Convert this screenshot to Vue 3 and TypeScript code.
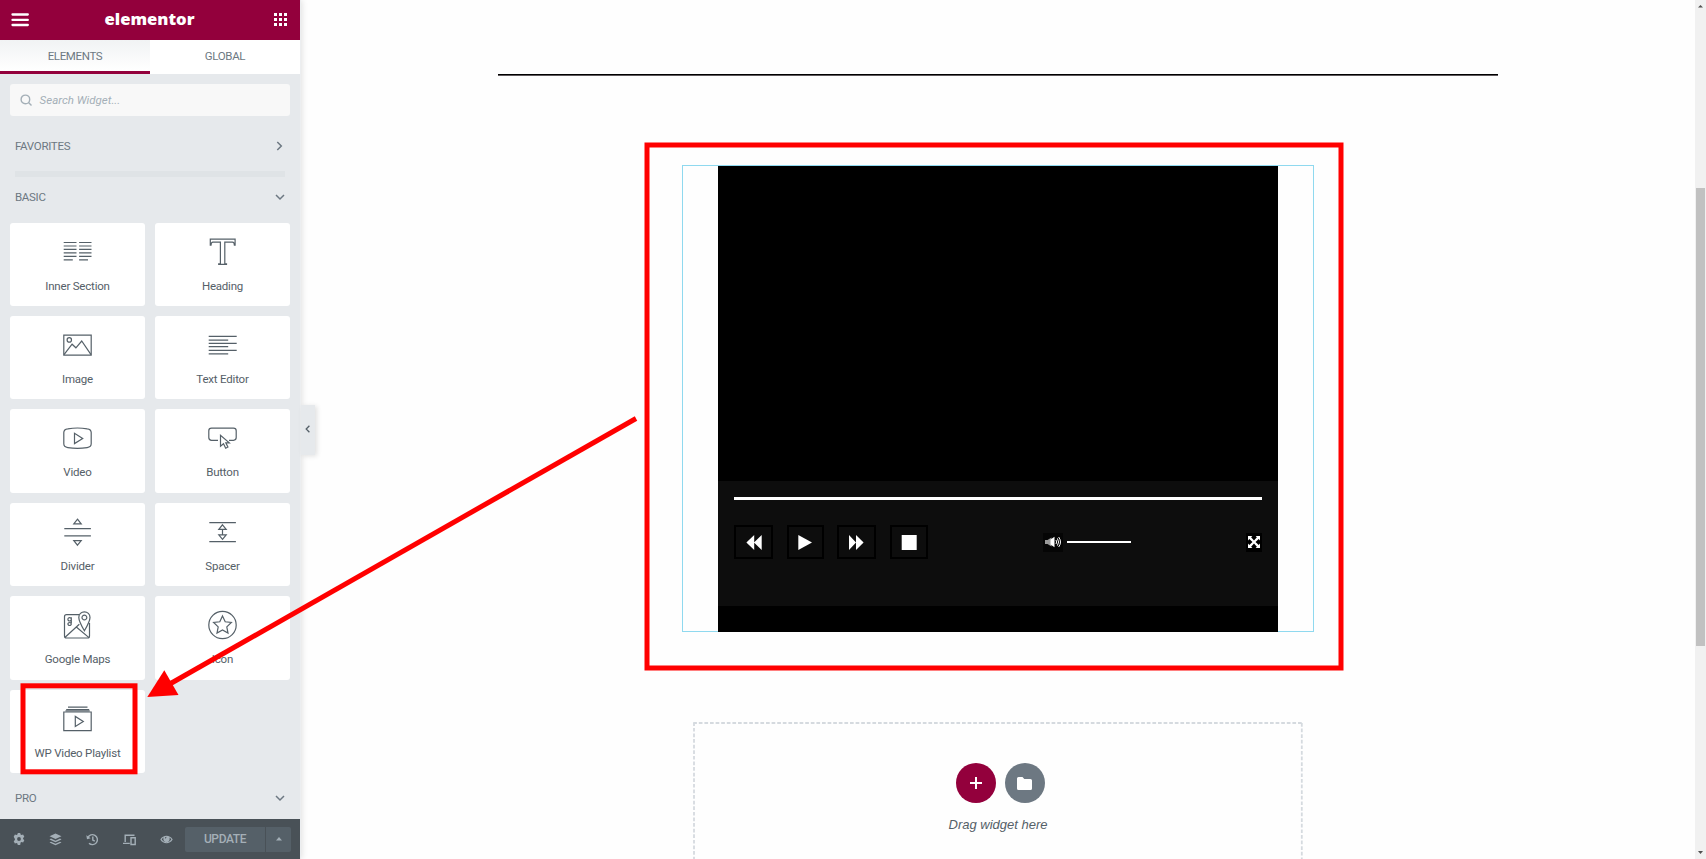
<script setup lang="ts">
interface Widget {
  name: string
  paths: string[]
}

const widgets: Widget[] = [
  {
    name: 'Inner Section',
    paths: ['M1.2 5.5H14M1.2 9H14M1.2 12.4H14M1.2 15.8H14M1.2 19.3H14M1.2 22.9H10.3M16.6 5.5H29M16.6 9H29M16.6 12.4H29M16.6 15.8H29M16.6 19.3H29M16.6 22.9H25.5'],
  },
  {
    name: 'Heading',
    paths: ['M2.8 2.2H27.6V8.2H26.9Q26.8 5.2 25 5.2H17.3V26.8H19V27.4H11.2V26.8H12.9V5.2H5.4Q3.6 5.2 3.500 8.2H2.8Z'],
  },
  {
    name: 'Image',
    paths: ['M1.3 5.2H28.7V25.2H1.3Z', 'M1.5 24.7L9.6 14.2L13.4 17.8L19.2 11L28.5 24.7', 'M9 9.9A2.2 2.2 0 1 1 4.6 9.9A2.2 2.2 0 1 1 9 9.9'],
  },
  {
    name: 'Text Editor',
    paths: ['M1.2 6.3H29.2M1.2 10.1H20.7M1.2 13.4H29.2M1.2 16.7H20.7M1.2 20.3H29.2M1.2 23.9H20.7'],
  },
  {
    name: 'Video',
    paths: ['M5.3 5.8Q15 4.2 24.7 5.8Q28.7 6.2 28.7 9.6V20.8Q28.7 24 24.7 24.6Q15 26 5.3 24.6Q1.3 24 1.3 20.8V9.6Q1.3 6.2 5.3 5.8Z', 'M12 10.3V20.6L20.2 15.5Z'],
  },
  {
    name: 'Button',
    paths: ['M10.5 17.3H4Q1.3 17.3 1.3 14.6V7.8Q1.3 5.1 4 5.1H26Q28.7 5.1 28.7 7.8V14.6Q28.7 17.3 26 17.3H21.5', 'M13 12.2V23.2L16 20.8L18.2 25.2L20.4 24.1L18.3 19.8H21.8Z'],
  },
  {
    name: 'Divider',
    paths: ['M1.8 11.7H28.4M1.8 18.8H28.4', 'M15 2.2L18.7 6.8H11.3Z', 'M15 28.2L18.7 23.6H11.3Z'],
  },
  {
    name: 'Spacer',
    paths: ['M1.8 5.6H28.4M1.8 24.6H28.4M15 12V18', 'M15 7.8L18.7 12.4H11.3Z', 'M15 22.4L18.7 17.8H11.3Z'],
  },
  {
    name: 'Google Maps',
    paths: [
      'M16.5 4.7H4Q2 4.7 2 6.7V26Q2 28 4 28H25Q27 28 27 26V13',
      'M2.6 27.3L16.800 14.300M13.800 17L26.5 27.600',
      'M21.9 20.8Q16.3 11 16.3 7.4A5.6 5.6 0 0 1 27.5 7.4Q27.5 11 21.9 20.8Z',
      'M24.3 7.5A2.4 2.4 0 1 1 19.5 7.5A2.4 2.4 0 1 1 24.3 7.5',
      'M8.8 7.3V13M8.8 9.3A1.7 1.7 0 1 1 5.4 9.3A1.7 1.7 0 1 1 8.8 9.3M8.8 14A1.7 1.5 0 1 1 5.4 14A1.7 1.5 0 1 1 8.8 14',
    ],
  },
  {
    name: 'Icon',
    paths: ['M28.7 15A13.7 13.7 0 1 1 1.3 15A13.7 13.7 0 1 1 28.7 15', 'M15 6L17.7 11.8L23.9 12.5L19.3 16.9L20.5 23.1L15 20L9.5 23.1L10.7 16.9L6.1 12.5L12.3 11.8Z'],
  },
  {
    name: 'WP Video Playlist',
    paths: ['M1.3 8H28.7V26.7H1.3Z', 'M3.7 5.5H26.7M5.5 3.1H25M3 6.8H27.2', 'M12.8 12.4V22.4L20.8 17.4Z'],
  },
]
</script>

<template>
  <div class="editor">
    <aside class="panel">
      <header class="bar">
        <svg class="menu" width="18" height="14" viewBox="0 0 18 14"><path d="M1.5 1.5H16.8M1.5 6.9H16.8M1.5 12H16.8" /></svg>
        <svg class="logo" width="92" height="24" viewBox="0 0 92 24"><text x="1.500" y="17" textLength="90" lengthAdjust="spacingAndGlyphs">elementor</text></svg>
        <svg class="apps" width="13" height="13" viewBox="0 0 13 13"><path d="M0 0h3v3H0zM5 0h3v3H5zM10 0h3v3h-3zM0 5h3v3H0zM5 5h3v3H5zM10 5h3v3h-3zM0 10h3v3H0zM5 10h3v3H5zM10 10h3v3h-3z" /></svg>
      </header>
      <nav class="tabs">
        <div class="tab active">ELEMENTS</div>
        <div class="tab">GLOBAL</div>
      </nav>
      <div class="search">
        <svg width="12" height="12" viewBox="0 0 12 12"><circle cx="5.4" cy="5.4" r="4.300" /><path d="M8.500 8.500l3 3" /></svg>
        <span>Search Widget...</span>
      </div>
      <div class="category favorites">
        <span>FAVORITES</span>
        <svg width="10" height="10" viewBox="0 0 10 10"><path d="M2.300 1l4 4-4 4" /></svg>
      </div>
      <div class="separator"></div>
      <div class="category basic">
        <span>BASIC</span>
        <svg width="10" height="10" viewBox="0 0 10 10"><path d="M1 3l4 4 4-4" /></svg>
      </div>
      <div class="widgets">
        <div v-for="w in widgets" :key="w.name" class="card">
          <svg width="30" height="30" viewBox="0.5 0 30 30"><path v-for="(p, i) in w.paths" :key="i" :d="p" /></svg>
          <span>{{ w.name }}</span>
        </div>
      </div>
      <div class="category pro">
        <span>PRO</span>
        <svg width="10" height="10" viewBox="0 0 10 10"><path d="M1 3l4 4 4-4" /></svg>
      </div>
      <footer class="tools">
        <div class="tool">
          <svg width="12" height="12" viewBox="0 0 12 12"><path fill-rule="evenodd" d="M4.800 0h2.400l.4 1.600.9.5 1.600-.5 1.200 2.100-1.200 1.200v1.200l1.200 1.200-1.200 2.100-1.600-.5-.9.5L7.200 12H4.800l-.4-1.600-.9-.5-1.600.5L.7 8.300l1.200-1.200V5.900L.7 3.700l1.200-2.100 1.600.5.9-.5zM6 4.100a1.900 1.900 0 1 0 0 3.800 1.900 1.900 0 0 0 0-3.800z" /></svg>
        </div>
        <div class="tool">
          <svg width="13" height="13" viewBox="0 0 13 13"><path d="M6.500 0.500L12.500 3.300 6.500 6.100.5 3.300zM2 5.600L.5 6.400l6 2.800 6-2.800-1.500-.8-4.500 2.100zM2 8.700l-1.500.8 6 2.800 6-2.800-1.500-.8-4.500 2.100z" /></svg>
        </div>
        <div class="tool line">
          <svg width="13" height="13" viewBox="0 0 13 13"><path d="M1.800 4.700A5 5 0 1 1 3 10.300M6.800 3.500V7l2 1.200" /><path class="solid" d="M.3 2.200L1 6.300l3.700-1z" /></svg>
        </div>
        <div class="tool line">
          <svg width="13" height="13" viewBox="0 0 13 13"><path d="M2.200 9V2.300H11.500M0 10.400H6.800M8 4.800h4.200v6.700H8z" /></svg>
        </div>
        <div class="tool">
          <svg width="13" height="13" viewBox="0 0 13 13"><path fill-rule="evenodd" d="M.3 6.500C3.200 1.500 9.800 1.500 12.700 6.500 9.800 11.500 3.200 11.500.3 6.500zM1.700 6.500C4 9.900 9 9.900 11.300 6.500 10.800 5.700 10.100 5 9.400 4.600A3.200 3.200 0 1 1 3.600 4.600C2.900 5 2.200 5.700 1.700 6.500zM6.300 3.700A1.600 1.600 0 0 0 4.900 5.300L5.700 5.400 6.400 4.500z" /></svg>
        </div>
        <div class="update">UPDATE</div>
        <div class="caret"><svg width="6" height="4" viewBox="0 0 6 4"><path d="M3 0l3 3.500H0z" /></svg></div>
      </footer>
    </aside>

    <main class="preview">
      <div class="rule"></div>
      <section class="element">
        <div class="player">
          <div class="controls">
            <div class="progress"></div>
            <div class="buttons">
              <div class="btn rewind"><svg width="17" height="15" viewBox="0 0 17 15"><path d="M8.200 0v15L.4 7.500zM15.700 0v15L8 7.500z" /></svg></div>
              <div class="btn play"><svg width="15" height="15" viewBox="0 0 15 15"><path d="M.3 0v15L14 7.500z" /></svg></div>
              <div class="btn forward"><svg width="17" height="15" viewBox="0 0 17 15"><path d="M1 0v15L8 7.500zM8 0v15L15.600 7.500z" /></svg></div>
              <div class="btn stop"><svg width="16" height="15" viewBox="0 0 16 15"><path d="M.7 0h15v15h-15z" /></svg></div>
              <div class="volume">
                <svg width="17" height="12" viewBox="0 0 17 12">
                  <path class="dim" d="M0 4h2.500L6.500 1.500v9L2.500 8H0z" /><path d="M5.500 3.500L9.500.8v10.400L5.500 8.500z" />
                  <path class="wave" d="M11 4q1.200 2 0 4M12.400 2.400q2.400 3.600 0 7.200M13.700 1q3.600 5 0 10" />
                </svg>
              </div>
              <div class="level"></div>
              <div class="full">
                <svg width="12" height="12" viewBox="0 0 12 12"><path d="M0 0h4.400L3.100 1.300 6 4.500 8.900 1.300 7.600 0H12v4.400l-1.300-1.300L7.500 6l3.200 2.900L12 7.600V12H7.600l1.300-1.300L6 7.500l-2.900 3.200L4.400 12H0V7.600l1.300 1.300L4.500 6 1.300 3.100 0 4.400z" /></svg>
              </div>
            </div>
          </div>
        </div>
      </section>
      <section class="dropzone">
        <svg class="outline" width="612" height="200" viewBox="0 0 612 200">
          <path d="M1 200V1" /><path d="M0.200 1H609.600" /><path d="M608.800 1V200" />
        </svg>
        <div class="adders">
          <div class="circle add"><svg width="12" height="12" viewBox="0 0 12 12"><path d="M5 0h2v5h5v2H7v5H5V7H0V5h5z" /></svg></div>
          <div class="circle folder"><svg width="15" height="13" viewBox="0 0 15 13"><path d="M1.500 0h4L7.300 1.900H13.500Q15 1.900 15 3.400V11.500Q15 13 13.500 13H1.500Q0 13 0 11.500V1.500Q0 0 1.500 0z" /></svg></div>
        </div>
        <p>Drag widget here</p>
      </section>
    </main>

    <div class="scrollbar">
      <svg width="5" height="3" viewBox="0 0 5 3"><path d="M2.500 0L5 2.500H0z" /></svg>
      <div class="thumb"></div>
      <svg class="down" width="5" height="3" viewBox="0 0 5 3"><path d="M0 0h5L2.500 3z" /></svg>
    </div>

    <div class="collapse"><svg width="6" height="8" viewBox="0 0 6 8"><path d="M4.400 .8L1.200 4l3.200 3.200" /></svg></div>

    <svg class="annotations" width="1706" height="859" viewBox="0 0 1706 859">
      <rect x="647" y="145" width="694" height="523" />
      <rect x="23" y="685.800" width="112" height="86" />
      <path class="shaft" d="M636 418.500L168 685" />
      <path class="head" d="M147.300 697L164.300 670.300L178.500 695z" />
    </svg>
  </div>
</template>

<style>
body {
  margin: 0;
  overflow: hidden;
}
</style>

<style scoped>
.editor {
  position: relative;
  display: flex;
  width: 1706px;
  height: 859px;
  overflow: hidden;
  background: #fefefe;
  font-family: Roboto, "Liberation Sans", sans-serif;
}
.panel {
  display: flex;
  flex-direction: column;
  flex: none;
  width: 300px;
  background: #e6e9ec;
  border-right: 1px solid #eceef0;
  box-shadow: 1px 0 6px rgba(0, 0, 0, 0.12);
  box-sizing: content-box;
  z-index: 1;
}
.bar {
  display: flex;
  align-items: center;
  justify-content: space-between;
  width: 300px;
  height: 40px;
  padding: 0 13px 0 11px;
  box-sizing: border-box;
  background: #93003c;
}
.menu path {
  stroke: #fff;
  stroke-width: 2.300;
  stroke-linecap: round;
}
.logo {
  margin-left: -5px;
  overflow: visible;
}
.logo text {
  font: 800 16px "Open Sans", sans-serif;
  fill: #fff;
}
.apps {
  margin-bottom: 1px;
  fill: #fff;
}
.tabs {
  display: flex;
  width: 300px;
  height: 34px;
}
.tab {
  flex: 1;
  height: 34px;
  box-sizing: border-box;
  background: #fff;
  color: #6d7882;
  font-size: 11.500px;
  letter-spacing: -0.350px;
  line-height: 32px;
  text-align: center;
}
.tab.active {
  background: linear-gradient(#f1f3f4, #fff);
  border-bottom: 3px solid #93003c;
}
.search {
  display: flex;
  align-items: center;
  gap: 7.600px;
  width: 280px;
  height: 32px;
  margin: 10px 10px 0;
  padding-left: 10px;
  box-sizing: border-box;
  border-radius: 3px;
  background: #f8f8f8;
  color: #a4afb7;
  font-size: 11.500px;
  font-style: italic;
}
.search svg {
  fill: none;
  stroke: #a4afb7;
  stroke-width: 1.400;
}
.category {
  display: flex;
  align-items: center;
  justify-content: space-between;
  width: 270px;
  height: 20px;
  margin-left: 15px;
  color: #6d7882;
  font-size: 11.500px;
  letter-spacing: -0.300px;
}
.category svg {
  fill: none;
  stroke: #6d7882;
  stroke-width: 1.500;
}
.favorites {
  margin-top: 20px;
}
.separator {
  width: 270px;
  height: 6px;
  margin: 15px 0 0 15px;
  background: #dfe3e6;
}
.basic {
  margin-top: 10px;
}
.widgets {
  display: grid;
  grid-template-columns: 135px 135px;
  grid-auto-rows: 83.420px;
  gap: 10px;
  margin: 15.600px 0 0 10px;
}
.card {
  display: flex;
  flex-direction: column;
  align-items: center;
  padding-top: 14px;
  box-sizing: border-box;
  border-radius: 3px;
  background: #fff;
  color: #556068;
  font-size: 11.500px;
  letter-spacing: -0.200px;
}
.card svg {
  flex: none;
  margin-left: 1px;
  fill: none;
  stroke: #556068;
  stroke-width: 1.200;
}
.card span {
  margin-top: 12px;
  line-height: 14px;
}
.pro {
  margin-top: 15px;
}
.tools {
  display: flex;
  align-items: center;
  width: 300px;
  height: 40px;
  margin-top: auto;
  background: #495157;
}
.tool {
  display: flex;
  justify-content: center;
  width: 37px;
}
.tool svg,
.caret svg {
  fill: #a4afb7;
}
.tool.line svg {
  fill: none;
  stroke: #a4afb7;
  stroke-width: 1.400;
}
.tool .solid {
  fill: #a4afb7;
  stroke: none;
}
.update,
.caret {
  display: flex;
  align-items: center;
  justify-content: center;
  height: 25px;
  background: #556068;
  border-radius: 2px 0 0 2px;
  color: #a4afb7;
  font-size: 12px;
  font-weight: 500;
  letter-spacing: -0.400px;
}
.update {
  width: 80px;
}
.caret {
  width: 25px;
  margin-left: 1px;
  border-radius: 0 2px 2px 0;
}
.preview {
  display: flex;
  flex: 1;
  flex-direction: column;
  align-items: center;
}
.rule {
  flex: none;
  width: 1000px;
  height: 1px;
  margin-top: 74px;
  background: #000;
  border-bottom: 1px solid #5d585b;
}
.element {
  display: flex;
  flex: none;
  justify-content: center;
  width: 632px;
  height: 467px;
  margin-top: 89px;
  box-sizing: border-box;
  border: 1px solid #8fd9ef;
}
.player {
  width: 560px;
  height: 466px;
  box-sizing: border-box;
  padding-top: 315px;
  background: #000;
}
.controls {
  height: 125px;
  padding: 16px 16px 0;
  box-sizing: border-box;
  background: #0d0d0d;
}
.progress {
  height: 3px;
  background: #fff;
}
.buttons {
  display: flex;
  align-items: center;
  height: 34px;
  margin-top: 25px;
}
.btn {
  display: flex;
  align-items: center;
  justify-content: center;
  height: 34px;
  box-sizing: border-box;
  border: 2px solid #000;
  fill: #fff;
}
.btn svg {
  margin-top: 1px;
}
.rewind,
.forward {
  width: 39px;
}
.rewind svg {
  margin-left: 1px;
}
.play {
  width: 37px;
  margin: 0 13px 0 14px;
}
.stop {
  width: 38px;
  margin-left: 14px;
}
.volume {
  display: flex;
  align-items: center;
  justify-content: center;
  width: 20px;
  height: 19px;
  margin-left: 115px;
  background: #050505;
  fill: #fff;
}
.volume .dim {
  fill: #999;
}
.volume .wave {
  fill: none;
  stroke: #fff;
  stroke-width: 1;
}
.level {
  width: 64px;
  height: 2px;
  margin-left: 4px;
  background: #fff;
}
.full {
  display: flex;
  align-items: center;
  justify-content: center;
  width: 16px;
  height: 19px;
  margin-left: auto;
  background: #000;
  fill: #fff;
}
.dropzone {
  position: relative;
  width: 610px;
  height: 200px;
  flex: none;
  margin-top: 90px;
  padding-top: 41px;
  box-sizing: border-box;
}
.outline {
  position: absolute;
  left: 0;
  top: 0;
  fill: none;
  stroke: #d5dadf;
  stroke-width: 1.800;
  stroke-dasharray: 3.700 1.900;
}
.adders {
  display: flex;
  justify-content: center;
  gap: 9px;
  margin-left: 5px;
}
.circle {
  display: flex;
  align-items: center;
  justify-content: center;
  width: 40px;
  height: 40px;
  border-radius: 50%;
  fill: #fff;
}
.add {
  background: #93003c;
}
.folder {
  background: #6d7882;
}
.folder svg {
  margin-right: 1px;
}
.dropzone p {
  margin: 14px 0 0;
  color: #556068;
  font: italic 13px/16px "Liberation Sans", Arial, sans-serif;
  text-align: center;
}
.scrollbar {
  display: flex;
  flex-direction: column;
  align-items: center;
  width: 11px;
  padding: 5px 0;
  box-sizing: border-box;
  background: #f1f1f1;
  fill: #505050;
}
.thumb {
  width: 9px;
  height: 458px;
  margin-top: 180px;
  background: #c1c1c1;
}
.down {
  margin-top: auto;
}
.collapse {
  position: absolute;
  left: 301px;
  top: 405px;
  z-index: 2;
  display: flex;
  align-items: center;
  justify-content: center;
  width: 14px;
  height: 50px;
  padding-bottom: 2px;
  box-sizing: border-box;
  background: #e6e9ec;
  box-shadow: 2px 1px 5px rgba(0, 0, 0, 0.12);
}
.collapse svg {
  fill: none;
  stroke: #556068;
  stroke-width: 1.300;
}
.annotations {
  position: absolute;
  inset: 0;
  z-index: 3;
  fill: none;
  stroke: #f00;
  stroke-width: 5;
  pointer-events: none;
}
.annotations .head {
  fill: #f00;
  stroke: none;
}
</style>
